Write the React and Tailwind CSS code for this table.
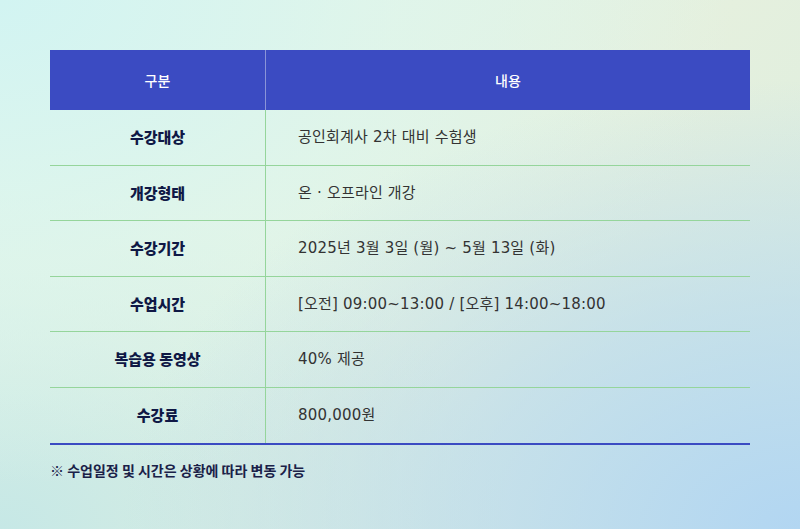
const rows = [
  { label: '수강대상', value: '공인회계사 2차 대비 수험생' },
  { label: '개강형태', value: '온 · 오프라인 개강' },
  { label: '수강기간', value: '2025년 3월 3일 (월) ~ 5월 13일 (화)' },
  { label: '수업시간', value: '[오전] 09:00~13:00 / [오후] 14:00~18:00' },
  { label: '복습용 동영상', value: '40% 제공' },
  { label: '수강료', value: '800,000원' },
];

export default function App() {
  return (
    <div className="w-[800px] h-[529px] overflow-hidden bg-[#e5f1e0] bg-[radial-gradient(ellipse_at_100%_100%,#b2d6f2_0%,rgba(182,216,240,0.6)_30%,rgba(230,239,216,0)_60%),radial-gradient(ellipse_at_0%_0%,#d2f4f2_0%,rgba(222,246,236,0.7)_35%,rgba(230,240,220,0)_65%),radial-gradient(ellipse_at_0%_100%,#c6e8e6_0%,rgba(200,232,228,0)_45%),linear-gradient(135deg,#e0f6ee,#e5f0de_55%,#d8ecdf)] font-['Noto_Sans_CJK_KR','Noto_Sans',sans-serif] pt-[50px] px-[50px]">
      <div className="w-[700px]">
        <div className="flex h-[60px] bg-[#3b4bc2] text-white text-[14px] font-medium">
          <div className="w-[216px] border-r border-[#8a94d8] flex items-center justify-center">구분</div>
          <div className="flex-1 flex items-center justify-center">내용</div>
        </div>
        {rows.map((r, i) => (
          <div
            key={i}
            className={`flex ${i === rows.length - 1 ? 'h-[56.6px] border-b-2 border-[#3b4bc2]' : 'h-[55.6px] border-b border-[#95d59b]'}`}
          >
            <div className="w-[216px] border-r border-[#95d59b] flex items-center justify-center text-[15px] font-black text-[#0f1845]">
              {r.label}
            </div>
            <div className="flex-1 flex items-center pl-[32px] text-[15px] text-[#333333] font-['DejaVu_Sans','Noto_Sans_CJK_KR',sans-serif] tracking-[0.2px]">
              {r.value}
            </div>
          </div>
        ))}
        <p className="mt-[15px] text-[14px] font-semibold text-[#1a2148]">※ 수업일정 및 시간은 상황에 따라 변동 가능</p>
      </div>
    </div>
  );
}
